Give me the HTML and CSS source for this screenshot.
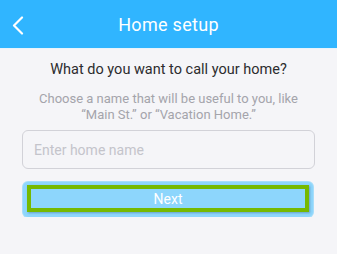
FILE: index.html
```html
<!DOCTYPE html>
<html lang="en">
<head>
  <meta charset="UTF-8">
  <meta name="viewport" content="width=device-width, initial-scale=1.0">
  <title>Home setup</title>
  <link rel="stylesheet" href="styles.css">
</head>
<body>
  <header class="topbar">
    <a class="back" aria-label="Back">
      <svg width="12" height="19" viewBox="0 0 12 19">
        <polyline points="10,1.5 2,9.5 10,17.5" fill="none" stroke="#fff" stroke-width="2.2" stroke-linecap="round" stroke-linejoin="round"/>
      </svg>
    </a>
    <h1>Home setup</h1>
  </header>

  <main class="setup">
    <h2>What do you want to call your home?</h2>
    <p class="hint">Choose a name that will be useful to you, like<br>“Main St.” or “Vacation Home.”</p>
    <input type="text" class="name-input" placeholder="Enter home name">
    <div class="next-wrap">
      <button class="next-btn">Next</button>
    </div>
  </main>
</body>
</html>
```

FILE: styles.css
```css
* {
  box-sizing: border-box;
}
body {
  margin: 0;
  font-family: Roboto, 'Liberation Sans', sans-serif;
  background-color: #f5f5f8;
  color: #333;
}
.topbar {
  height: 49px;
  background-color: #30b5ff;
  display: flex;
  align-items: center;
  justify-content: center;
  position: relative;
  border-bottom: 1px solid #e8f4fc;
}
.topbar h1 {
  margin: 0;
  color: #fff;
  font-size: 18px;
  font-weight: 400;
  letter-spacing: 0.3px;
}
.back {
  position: absolute;
  left: 12px;
  top: 16px;
  display: flex;
}
.setup {
  padding: 12px 22px 0;
  display: flex;
  flex-direction: column;
  align-items: center;
}
.setup h2 {
  margin: 0;
  font-size: 14.5px;
  font-weight: 400;
  color: #2c2c2e;
  line-height: 18px;
}
.hint {
  margin: 12px 0 0;
  text-align: center;
  font-size: 13px;
  line-height: 15.5px;
  color: #a4a4ab;
}
.name-input {
  margin-top: 8px;
  width: 100%;
  height: 39px;
  border: 1px solid #d2d2d8;
  border-radius: 6px;
  background-color: #f5f5f8;
  padding: 0 11px;
  font-family: inherit;
  font-size: 14px;
  outline: none;
}
.name-input::placeholder {
  color: #c4c4cb;
}
.next-wrap {
  margin-top: 13px;
  width: 290px;
  align-self: flex-start;
  margin-left: 1px;
  padding: 3px 4px 5px 4px;
  background-color: #8ed6fc;
  border-radius: 5px;
  box-shadow: 0 0 0 1px #a8def9;
}
.next-btn {
  display: block;
  width: 100%;
  height: 27px;
  border: 4px solid #76b900;
  background-color: #8dd6fc;
  color: #fff;
  font-family: inherit;
  font-size: 14px;
  padding: 0;
  box-shadow: 1px 1px 2px rgba(60, 90, 130, 0.45);
}
```
